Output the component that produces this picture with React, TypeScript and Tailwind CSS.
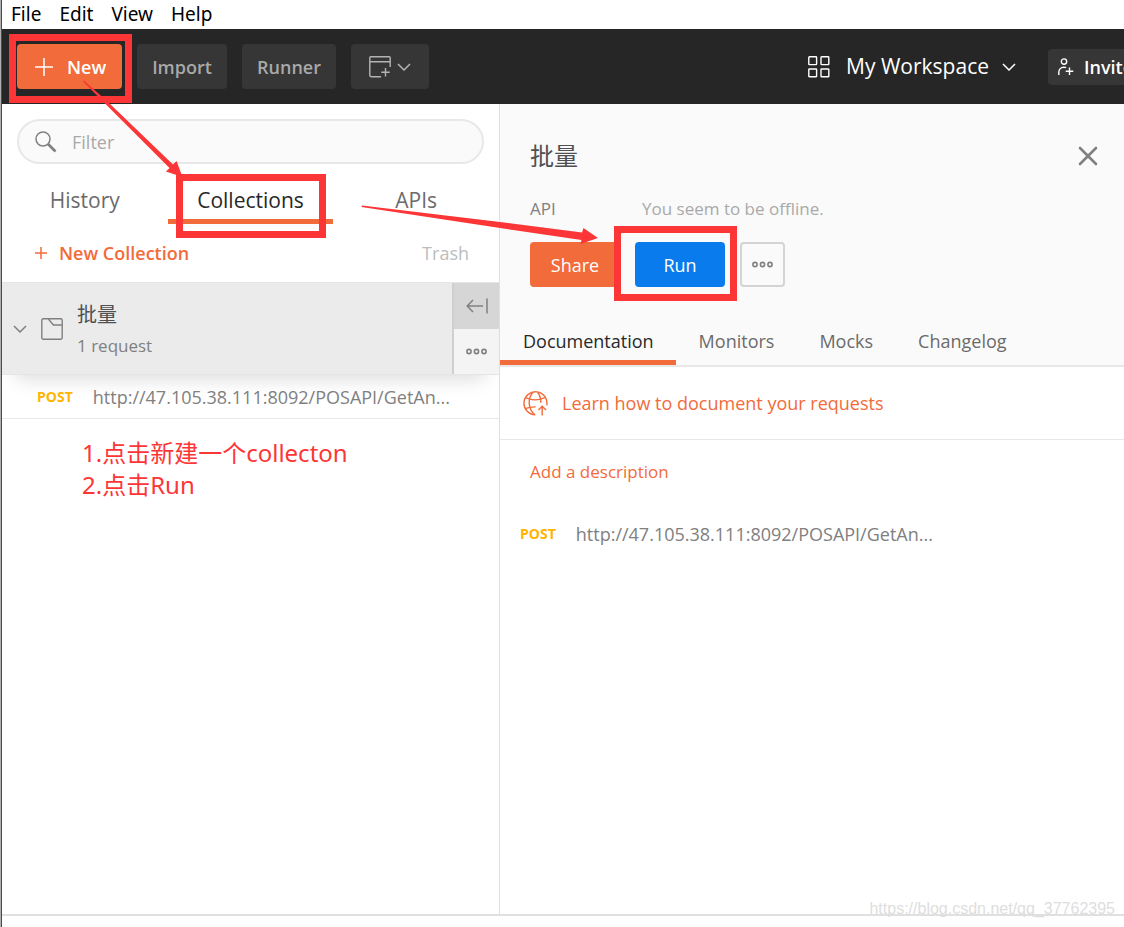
import type { ReactNode } from 'react'

const MENU = ['File', 'Edit', 'View', 'Help']
const SIDE_TABS = ['History', 'Collections', 'APIs']
const DETAIL_TABS = ['Documentation', 'Monitors', 'Mocks', 'Changelog']
const REQUEST_URL = 'http://47.105.38.111:8092/POSAPI/GetAn...'

function ChevronIcon({ className }: { className?: string }) {
  return (
    <svg className={className} width="14" height="8" viewBox="0 0 14 8" fill="none" stroke="currentColor" strokeWidth="1.5">
      <path d="M1 1l6 6 6-6" />
    </svg>
  )
}

function DotsIcon() {
  return (
    <svg width="21" height="7" viewBox="0 0 21 7" fill="none" stroke="currentColor" strokeWidth="1.6">
      <circle cx="3" cy="3.5" r="2.1" />
      <circle cx="10.5" cy="3.5" r="2.1" />
      <circle cx="18" cy="3.5" r="2.1" />
    </svg>
  )
}

function WindowPlusIcon() {
  return (
    <svg width="22" height="22" viewBox="0 0 22 22" fill="none" stroke="currentColor" strokeWidth="1.4">
      <path d="M12 20.8H2.4a1.6 1.6 0 0 1-1.6-1.6V1.8a1 1 0 0 1 1-1h18.4a1 1 0 0 1 1 1V11M.8 5.8h20.4" />
      <path d="M16.5 12v8.4M12.3 16.2h8.4" />
    </svg>
  )
}

function WorkspaceIcon() {
  return (
    <svg width="22" height="22" viewBox="0 0 22 22" fill="none" stroke="currentColor" strokeWidth="1.4">
      <rect x=".8" y=".8" width="7.8" height="7.8" rx=".6" />
      <rect x="13" y=".8" width="7.8" height="7.8" rx=".6" />
      <rect x=".8" y="13" width="7.8" height="7.8" rx=".6" />
      <rect x="13" y="13" width="7.8" height="7.8" rx=".6" />
    </svg>
  )
}

function InviteIcon() {
  return (
    <svg width="16" height="18" viewBox="0 0 16 18" fill="none" stroke="currentColor" strokeWidth="1.4">
      <circle cx="6" cy="3.6" r="2.7" />
      <path d="M.8 17v-2.6c0-3 2-5.2 5-5.2 1 0 1.6.1 2.3.5" />
      <path d="M11.5 9.4v7.6M7.7 13.2h7.6" />
    </svg>
  )
}

function SearchIcon() {
  return (
    <svg width="22" height="22" viewBox="0 0 22 22" fill="none" stroke="currentColor">
      <circle cx="8" cy="8" r="7" strokeWidth="1.5" />
      <path d="M13 13l7.5 7.5" strokeWidth="2.6" />
    </svg>
  )
}

function FolderIcon() {
  return (
    <svg width="22" height="22" viewBox="0 0 22 22" fill="none" stroke="currentColor" strokeWidth="1.4">
      <rect x=".8" y=".8" width="20.4" height="20.4" rx="1.4" />
      <path d="M7.4 1l5 6h8.8" />
    </svg>
  )
}

function CollapseIcon() {
  return (
    <svg width="22" height="16" viewBox="0 0 22 16" fill="none" stroke="currentColor" strokeWidth="1.5">
      <path d="M7 2L1.2 8 7 14M1.2 8H17M21 .5v15" />
    </svg>
  )
}

function GlobeIcon() {
  return (
    <svg width="25" height="25" viewBox="0 0 25 25" fill="none" stroke="currentColor" strokeWidth="1.4">
      <path d="M12.3 23.8A11.5 11.5 0 1 1 23.8 14.4" />
      <path d="M9.8 1.2C4.6 7.6 4.8 17.6 11.6 23.6" />
      <path d="M14.6 1.2c2.2 2.8 3.3 6.2 3.2 10.5" />
      <path d="M2.6 6.6c6 2.8 13.4 2.8 19.2 0" />
      <path d="M2.2 17.7c3-1.3 6.4-1.9 10.4-1.8" />
      <path d="M19.2 24.6v-9M15.400 19l3.800-3.800L23 19" />
    </svg>
  )
}

function CloseIcon() {
  return (
    <svg width="20" height="20" viewBox="0 0 20 20" stroke="currentColor" strokeWidth="2.6" strokeLinecap="round">
      <path d="M2 2l16 16M18 2L2 18" />
    </svg>
  )
}

function HeaderButton({ label, children, className }: { label?: string; children: ReactNode; className: string }) {
  return (
    <button type="button" aria-label={label} className={`flex h-[45px] shrink-0 items-center justify-center rounded text-lg font-semibold ${className}`}>
      {children}
    </button>
  )
}

function Header() {
  return (
    <header className="flex h-[75px] shrink-0 items-center overflow-hidden bg-[#262626] pl-[15px]">
      <div className="flex flex-1 gap-[15px]">
        <HeaderButton className="w-[105px] gap-3.5 bg-[#f26b3a] pl-0.5 text-white">
          <svg width="18" height="18" viewBox="0 0 18 18" stroke="currentColor" strokeWidth="1.5">
            <path d="M9 0v18M0 9h18" />
          </svg>
          New
        </HeaderButton>
        <HeaderButton className="w-[90px] bg-[#363636] text-[#a9a9a9]">Import</HeaderButton>
        <HeaderButton className="w-[94px] bg-[#363636] text-[#a9a9a9]">Runner</HeaderButton>
        <HeaderButton label="Open new" className="w-[78px] gap-1.5 bg-[#363636] text-[#b4b4b4]">
          <WindowPlusIcon />
          <ChevronIcon />
        </HeaderButton>
      </div>
      <button type="button" className="mr-8 flex shrink-0 items-center gap-4 pt-px text-[21px] text-white">
        <WorkspaceIcon />
        My Workspace
        <ChevronIcon className="-ml-[3px]" />
      </button>
      <button type="button" className="-mr-8 flex h-9 w-[108px] shrink-0 items-center gap-2.5 rounded bg-[#363636] pl-2.5 text-lg font-semibold text-white">
        <InviteIcon />
        Invite
      </button>
    </header>
  )
}

function Sidebar() {
  return (
    <aside className="w-[498px] shrink-0 border-r border-[#e0e0e0] bg-white">
      <div className="px-[15px] pt-[15px]">
        <label className="flex h-[45px] items-center gap-[15px] rounded-full border-2 border-[#e8e8e8] bg-[#fafafa] px-4 text-[#808080]">
          <SearchIcon />
          <input
            type="text"
            aria-label="Filter"
            placeholder="Filter"
            className="min-w-0 flex-1 bg-transparent text-lg outline-none placeholder:text-[#a9a9a9]"
          />
        </label>
      </div>

      <nav className="grid h-[60px] grid-cols-3 text-[21px]">
        {SIDE_TABS.map((tab) => (
          <button
            key={tab}
            type="button"
            className={
              tab === 'Collections'
                ? 'border-b-5 border-[#f26b3a] pt-[18px] text-[#282828]'
                : 'border-b-5 border-transparent pt-[18px] text-[#6b6b6b]'
            }
          >
            {tab}
          </button>
        ))}
      </nav>

      <div className="flex h-[58px] items-center justify-between pr-[30px] pl-[33px] text-lg">
        <button type="button" className="flex items-center gap-3 font-semibold text-[#f26b3a]">
          <svg width="12" height="12" viewBox="0 0 12 12" stroke="currentColor" strokeWidth="1.5">
            <path d="M6 0v12M0 6h12" />
          </svg>
          New Collection
        </button>
        <button type="button" className="font-medium text-[#bdbdbd]">Trash</button>
      </div>

      <div className="flex h-[93px] border-y border-[#e5e5e5] bg-[#ebebeb] shadow-[0_18px_18px_-14px_rgba(0,0,0,0.14)]">
        <div className="flex flex-1 items-center pl-[11px] text-[#808080]">
          <ChevronIcon />
          <span className="ml-3.5">
            <FolderIcon />
          </span>
          <div className="ml-3.5 pt-0.5">
            <h2 className="text-[20px] leading-8 text-[#505050]">批量</h2>
            <p className="text-[17px] leading-[30px]">1 request</p>
          </div>
        </div>
        <div className="flex w-[47px] flex-col border-l-2 border-[#cfcfcf] text-[#808080]">
          <button type="button" aria-label="Collapse" className="flex flex-1 items-center justify-center bg-[#d6d6d6]">
            <CollapseIcon />
          </button>
          <button type="button" aria-label="Collection actions" className="flex flex-1 items-center justify-center bg-[#f4f4f4]">
            <DotsIcon />
          </button>
        </div>
      </div>

      <a href="#" className="flex h-11 items-center gap-5 border-b border-[#e8e8e8] pl-[35px] text-lg text-[#808080]">
        <span className="text-sm font-bold text-[#ffb400]">POST</span>
        {REQUEST_URL}
      </a>

      <div className="pt-[18px] pl-20 font-['Noto_Sans','Noto_Sans_CJK_SC',sans-serif] text-2xl leading-8 text-[#fc3636]">
        <p>1.点击新建一个collecton</p>
        <p>2.点击Run</p>
      </div>
    </aside>
  )
}

function Detail() {
  return (
    <main className="min-w-0 flex-1 bg-white">
      <section className="border-b-2 border-[#e8e8e8] bg-[#fafafa]">
        <div className="flex items-center justify-between pt-8 pr-[26px] pl-[30px]">
          <h1 className="text-2xl leading-10 text-[#505050]">批量</h1>
          <button type="button" aria-label="Close" className="text-[#808080]">
            <CloseIcon />
          </button>
        </div>
        <div className="mt-5 flex pl-[30px] text-[17px] leading-[26px] text-[#808080]">
          <span className="w-28">API</span>
          <span className="text-[#a9a9a9]">You seem to be offline.</span>
        </div>
        <div className="mt-5 flex gap-[15px] pl-[30px] text-lg text-white">
          <button type="button" className="h-[45px] w-[90px] rounded bg-[#f26b3a] font-medium">Share</button>
          <button type="button" className="h-[45px] w-[90px] rounded bg-[#097bed] font-medium">Run</button>
          <button
            type="button"
            aria-label="More actions"
            className="flex size-[45px] items-center justify-center rounded border-2 border-[#d4d4d4] text-[#808080]"
          >
            <DotsIcon />
          </button>
        </div>
        <nav className="mt-[30px] flex h-12 text-lg">
          {DETAIL_TABS.map((tab) => (
            <button
              key={tab}
              type="button"
              className={
                tab === 'Documentation'
                  ? 'border-b-5 border-[#f26b3a] pt-1 pr-[22px] pl-[23px] text-[#282828]'
                  : 'border-b-5 border-transparent pt-1 pr-[22px] pl-[23px] text-[#6b6b6b]'
              }
            >
              {tab}
            </button>
          ))}
        </nav>
      </section>

      <a href="#" className="flex h-[73px] items-center gap-3.5 border-b border-[#e8e8e8] pl-[23px] text-lg text-[#f26b3a]">
        <GlobeIcon />
        Learn how to document your requests
      </a>
      <button type="button" className="mt-5 ml-[30px] block text-[17px] leading-6 text-[#f26b3a]">Add a description</button>
      <a href="#" className="mt-9 flex items-center gap-5 pl-5 text-lg text-[#808080]">
        <span className="text-sm font-bold text-[#ffb400]">POST</span>
        {REQUEST_URL}
      </a>
    </main>
  )
}

// Red boxes and arrows drawn over the window
function Markers() {
  return (
    <svg className="pointer-events-none absolute top-0 left-0" width="760" height="320" viewBox="1 0 760 320" fill="none">
      <g stroke="#fc3636" strokeWidth="7">
        <rect x="12.5" y="37.5" width="116" height="62" />
        <rect x="179.5" y="177.5" width="143" height="57" />
        <rect x="617.5" y="229.5" width="116" height="68" />
      </g>
      <g fill="#fc3636">
        <path d="M84 80.5L109 103 173 164.5 176.5 161 182.5 177 166 171.500 169.500 168 105 103.500 83 81.500Z" />
        <path d="M362 205.500L500 222 582 232.500 583.500 228 598 238 580.500 244 581.500 240 500 228 361.500 207Z" />
      </g>
    </svg>
  )
}

export default function App() {
  return (
    <div className="relative flex min-h-screen flex-col overflow-hidden border-l border-[#b0b0b0] bg-white font-['Open_Sans','Noto_Sans_CJK_SC',sans-serif]">
      <div className="flex flex-1 flex-col border-l border-[#4a4a4a]">
        <nav className="flex h-[29px] shrink-0 items-center gap-[18px] pl-[9px] font-['Noto_Sans',sans-serif] text-[19px] text-black">
          {MENU.map((item) => (
            <button key={item} type="button">
              {item}
            </button>
          ))}
        </nav>
        <Header />
        <div className="flex flex-1">
          <Sidebar />
          <Detail />
        </div>
        <footer className="h-[13px] shrink-0 border-t-2 border-[#e0e0e0] bg-white" />
      </div>
      <Markers />
      <span className="absolute right-[9px] bottom-1.5 font-['Liberation_Sans',sans-serif] text-base text-[#dedede]">
        https://blog.csdn.net/qq_37762395
      </span>
    </div>
  )
}
